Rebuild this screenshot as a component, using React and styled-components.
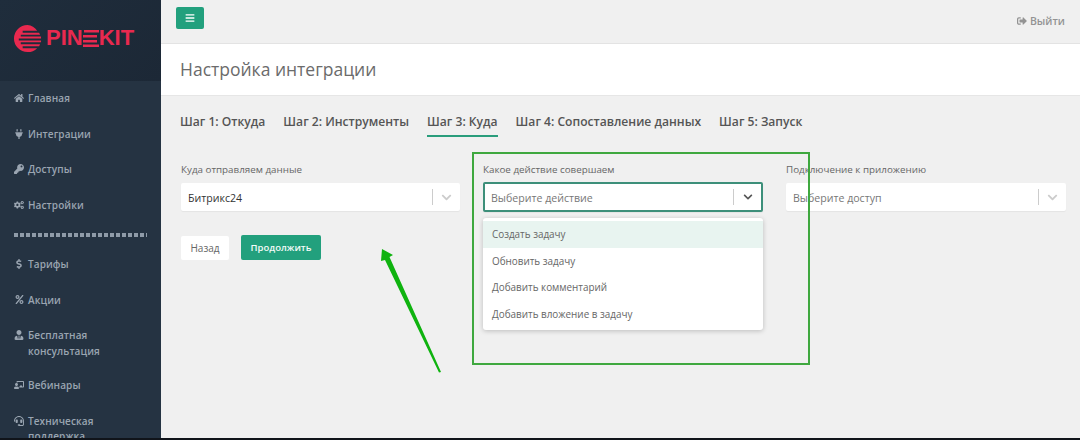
import React from 'react'
import styled, { createGlobalStyle } from 'styled-components'
import {
  FaBars, FaChalkboardTeacher, FaChevronDown, FaCogs, FaDollarSign, FaHeadset, FaHome,
  FaKey, FaPercent, FaPlug, FaSignOutAlt, FaUserTie,
} from 'react-icons/fa'

const GlobalStyle = createGlobalStyle`
  html, body {
    margin: 0;
    height: 440px;
    overflow: hidden;
    background: #f0f0f0;
    font-family: "Open Sans", "Noto Sans", sans-serif;
  }
  * { box-sizing: border-box; }
`

const navTop = [
  { icon: FaHome, label: 'Главная' },
  { icon: FaPlug, label: 'Интеграции' },
  { icon: FaKey, label: 'Доступы' },
  { icon: FaCogs, label: 'Настройки' },
]

const navBottom = [
  { icon: FaDollarSign, label: 'Тарифы' },
  { icon: FaPercent, label: 'Акции', small: true },
  { icon: FaUserTie, label: 'Бесплатная консультация' },
  { icon: FaChalkboardTeacher, label: 'Вебинары' },
  { icon: FaHeadset, label: 'Техническая поддержка' },
]

const tabs = ['Шаг 1: Откуда', 'Шаг 2: Инструменты', 'Шаг 3: Куда', 'Шаг 4: Сопоставление данных', 'Шаг 5: Запуск']
const actions = ['Создать задачу', 'Обновить задачу', 'Добавить комментарий', 'Добавить вложение в задачу']

const Logo = () => (
  <LogoRow>
    <svg width="29" height="29" viewBox="0 0 30 30">
      <path
        fill="#e9294f"
        d="M15 1a14 14 0 0 0 0 28a14 14 0 0 0 10-4H10v-2h17l1-2H8v-2h21v-2H6v-2h23v-2H8V11h20l-1-2H10V7h15A14 14 0 0 0 15 1z"
      />
    </svg>
    <LogoText>PIN</LogoText>
    <svg width="16" height="17" viewBox="0 0 16 17">
      <path fill="#e9294f" d="M1 0h15v2.500H1zM0 5h14v2.500H0zM0 10h14v2.500H0zM0 14.500h16V17H0z" />
    </svg>
    <LogoText>KIT</LogoText>
  </LogoRow>
)

const NavItem = ({ icon: Icon, label, small }) => (
  <NavLink>
    <NavIcon><Icon size={small ? 9 : 10} /></NavIcon>
    <span>{label}</span>
  </NavLink>
)

const SelectBox = ({ value, placeholder, open }) => (
  <Select $open={open}>
    <SelectText $placeholder={placeholder}>{value || placeholder}</SelectText>
    <Divider />
    <Arrow $open={open}><FaChevronDown size={open ? 10 : 11} /></Arrow>
  </Select>
)

const App = () => (
  <Page>
    <GlobalStyle />
    <Sidebar>
      <SidebarHead><Logo /></SidebarHead>
      <Nav>
        {navTop.map((item) => <NavItem key={item.label} {...item} />)}
        <Dots />
        {navBottom.map((item) => <NavItem key={item.label} {...item} />)}
      </Nav>
    </Sidebar>

    <Main>
      <TopBar>
        <MenuButton><FaBars size={10} /></MenuButton>
        <Logout><FaSignOutAlt size={10} /> Выйти</Logout>
      </TopBar>
      <TitleBand><Title>Настройка интеграции</Title></TitleBand>
      <Content>
        <Tabs>
          {tabs.map((tab, i) => <Tab key={tab} $active={i === 2}>{tab}</Tab>)}
        </Tabs>
        <Fields>
          <Field>
            <Label>Куда отправляем данные</Label>
            <SelectBox value="Битрикс24" />
            <Buttons>
              <BackButton>Назад</BackButton>
              <NextButton>Продолжить</NextButton>
            </Buttons>
          </Field>
          <Field>
            <Label>Какое действие совершаем</Label>
            <SelectBox placeholder="Выберите действие" open />
            <Menu>
              {actions.map((action, i) => <Option key={action} $active={i === 0}>{action}</Option>)}
            </Menu>
          </Field>
          <Field>
            <Label>Подключение к приложению</Label>
            <SelectBox placeholder="Выберите доступ" />
          </Field>
        </Fields>
      </Content>
    </Main>

    <Highlight />
    <PointerArrow width="70" height="130" viewBox="0 0 70 130">
      <path fill="#0fb30f" d="M1 0L12 6L8.500 8L60 123L58 123.500L4 11L0 12z" />
    </PointerArrow>
    <BottomLine />
  </Page>
)

export default App

const Page = styled.div`
  position: relative;
  display: flex;
  width: 1080px;
  height: 440px;
  overflow: hidden;
`

const Sidebar = styled.aside`
  width: 161px;
  flex-shrink: 0;
  background: #253342;
`

const SidebarHead = styled.div`
  height: 81px;
  padding: 23px 0 0 13px;
  background: linear-gradient(135deg, #1f2d3c, #1c2836);
`

const LogoRow = styled.div`
  display: flex;
  align-items: center;
  height: 30px;
`

const LogoText = styled.span`
  font-family: "Liberation Sans", sans-serif;
  font-weight: 700;
  font-size: 22px;
  line-height: 1;
  color: #e9294f;
  &:first-of-type { margin-left: 4px; }
`

const Nav = styled.nav`
  display: flex;
  flex-direction: column;
  padding: 10px 0 0 14px;
`

const NavLink = styled.div`
  display: flex;
  gap: 4px;
  width: 100px;
  min-height: 35.500px;
  padding: 0 0 19px;
  font-size: 10px;
  line-height: 15.500px;
  font-weight: 600;
  letter-spacing: 0.1px;
  color: #9aa5b1;
`

const NavIcon = styled.span`
  display: flex;
  justify-content: center;
  flex-shrink: 0;
  width: 10px;
  padding-top: 2px;
`

const Dots = styled.div`
  width: 133px;
  height: 4px;
  margin: 0 0 20px;
  background: repeating-linear-gradient(90deg, #8f9ba8 0 4px, #253342 4px 6px);
`

const Main = styled.main`
  flex: 1;
  display: flex;
  flex-direction: column;
`

const TopBar = styled.header`
  display: flex;
  align-items: center;
  justify-content: space-between;
  height: 44px;
  padding: 0 15px 7px 15px;
  border-bottom: 1px solid #e3e3e3;
`

const MenuButton = styled.button`
  display: flex;
  align-items: center;
  justify-content: center;
  width: 28px;
  height: 22px;
  border: 0;
  border-radius: 2px;
  background: #22a07d;
  color: #fff;
`

const Logout = styled.span`
  display: flex;
  align-items: center;
  gap: 3px;
  margin-top: 6px;
  font-size: 10.500px;
  font-weight: 600;
  color: #939393;
`

const TitleBand = styled.div`
  height: 52px;
  padding-left: 19px;
  background: #fff;
  border-bottom: 1px solid #e6e6e6;
`

const Title = styled.h1`
  margin: 0;
  font-size: 17.500px;
  line-height: 50px;
  font-weight: 400;
  color: #6b6b6b;
`

const Content = styled.div`
  padding: 0 14px 0 19px;
`

const Tabs = styled.div`
  display: flex;
  gap: 18px;
  padding-top: 16px;
`

const Tab = styled.div`
  height: 25px;
  font-size: 12.100px;
  line-height: 20px;
  font-weight: 600;
  color: #555;
  border-bottom: ${(p) => (p.$active ? '2px solid #2a9d7c' : '0')};
`

const Fields = styled.div`
  display: grid;
  grid-template-columns: 279px 280px 280px;
  gap: 23px;
  margin: 25px 0 0 1px;
`

const Field = styled.div`
  display: flex;
  flex-direction: column;
`

const Label = styled.label`
  height: 15px;
  margin-bottom: 6px;
  font-size: 9.800px;
  line-height: 15px;
  color: #666;
`

const Select = styled.div`
  display: flex;
  align-items: center;
  height: ${(p) => (p.$open ? '30px' : '28px')};
  margin-top: ${(p) => (p.$open ? '-1px' : '0')};
  padding-left: ${(p) => (p.$open ? '6px' : '7px')};
  background: #fff;
  border: ${(p) => (p.$open ? '2px solid #3d8f7a' : '0')};
  border-radius: 2px;
  box-shadow: 0 1px 1px rgba(0, 0, 0, 0.05);
`

const SelectText = styled.span`
  flex: 1;
  padding-top: 1px;
  font-size: 10.600px;
  color: ${(p) => (p.$placeholder ? '#777' : '#333')};
`

const Divider = styled.span`
  width: 1px;
  height: 16px;
  background: #ccc;
`

const Arrow = styled.span`
  display: flex;
  justify-content: center;
  width: 27px;
  color: ${(p) => (p.$open ? '#555' : '#ccc')};
`

const Buttons = styled.div`
  display: flex;
  align-items: center;
  gap: 12px;
  margin-top: 24px;
`

const BackButton = styled.button`
  width: 48px;
  height: 24px;
  padding: 0;
  border: 0;
  border-radius: 2px;
  background: #fff;
  font-family: inherit;
  font-size: 10px;
  color: #666;
`

const NextButton = styled.button`
  width: 80px;
  height: 25px;
  padding: 0;
  border: 0;
  border-radius: 2px;
  background: #22a07d;
  font-family: inherit;
  font-size: 9.500px;
  font-weight: 600;
  color: #f3fbf8;
`

const Menu = styled.div`
  margin-top: 6px;
  padding: 3px 0;
  background: #fff;
  border-radius: 3px;
  box-shadow: 0 1px 5px rgba(0, 0, 0, 0.22);
`

const Option = styled.div`
  height: 26.500px;
  padding-left: 9px;
  font-size: 9.900px;
  line-height: 26px;
  color: #666;
  background: ${(p) => (p.$active ? '#e8f4f0' : 'transparent')};
`

const Highlight = styled.div`
  position: absolute;
  left: 472px;
  top: 152px;
  width: 338px;
  height: 213px;
  border: 2px solid #3fa83f;
`

const PointerArrow = styled.svg`
  position: absolute;
  left: 381px;
  top: 249px;
`

const BottomLine = styled.div`
  position: absolute;
  left: 0;
  bottom: 0;
  width: 100%;
  height: 2px;
  background: #10141a;
`
